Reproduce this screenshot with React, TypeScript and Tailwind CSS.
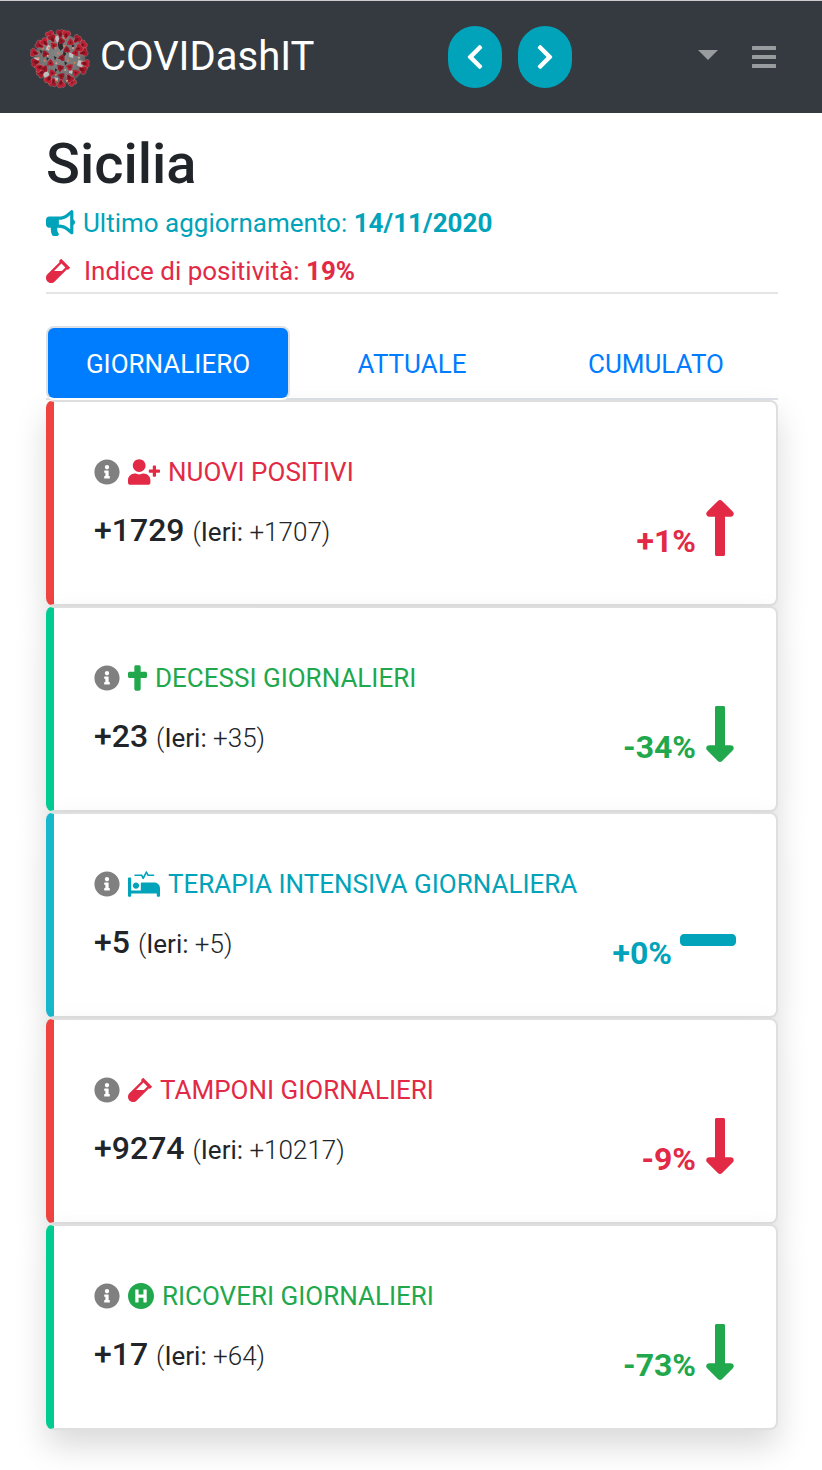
import React from 'react';
import {
  FaBullhorn,
  FaChevronLeft,
  FaChevronRight,
  FaCross,
  FaHospitalSymbol,
  FaInfoCircle,
  FaLongArrowAltDown,
  FaLongArrowAltUp,
  FaMinus,
  FaProcedures,
  FaUserPlus,
  FaVial,
} from 'react-icons/fa';
import type { IconType } from 'react-icons';

type Tone = 'danger' | 'success' | 'info';

const textTone: Record<Tone, string> = {
  danger: 'text-[#e22a46]',
  success: 'text-[#21a84d]',
  info: 'text-[#00a3b9]',
};

const borderTone: Record<Tone, string> = {
  danger: 'border-l-[#ee4340]',
  success: 'border-l-[#00cc92]',
  info: 'border-l-[#17b8cc]',
};

interface Stat {
  title: string;
  icon: IconType;
  iconWidth: string;
  value: string;
  previous: string;
  change: string;
  trend: 'up' | 'down' | 'flat';
  tone: Tone;
}

const stats: Stat[] = [
  { title: 'NUOVI POSITIVI', icon: FaUserPlus, iconWidth: 'w-8', value: '+1729', previous: '+1707', change: '+1%', trend: 'up', tone: 'danger' },
  { title: 'DECESSI GIORNALIERI', icon: FaCross, iconWidth: 'w-[19px]', value: '+23', previous: '+35', change: '-34%', trend: 'down', tone: 'success' },
  { title: 'TERAPIA INTENSIVA GIORNALIERA', icon: FaProcedures, iconWidth: 'w-8', value: '+5', previous: '+5', change: '+0%', trend: 'flat', tone: 'info' },
  { title: 'TAMPONI GIORNALIERI', icon: FaVial, iconWidth: 'w-6', value: '+9274', previous: '+10217', change: '-9%', trend: 'down', tone: 'danger' },
  { title: 'RICOVERI GIORNALIERI', icon: FaHospitalSymbol, iconWidth: 'w-[26px]', value: '+17', previous: '+64', change: '-73%', trend: 'down', tone: 'success' },
];

const CENTER = { x: 121, y: 117 };

const rimSpikes = [
  [91, 44], [122, 40], [140, 43], [173, 57], [190, 74], [193, 97], [198, 131], [190, 150],
  [157, 186], [150, 176], [124, 192], [99, 188], [86, 179], [63, 160], [57, 143], [46, 127],
  [43, 98], [59, 74], [74, 66], [97, 54], [178, 85],
];

const faceSpikes = [
  [101, 76], [76, 101], [92, 128], [127, 112], [151, 140], [121, 143], [97, 158],
  [141, 88], [168, 97], [126, 167], [167, 158], [124, 62], [152, 66], [75, 145],
];

const specks = [
  [84, 107], [107, 84], [133, 78], [110, 130], [145, 122], [165, 128], [137, 150], [108, 164],
  [88, 84], [160, 84], [115, 100], [75, 122], [142, 182], [112, 182], [70, 86], [178, 113], [132, 54], [56, 113],
];

function VirusLogo() {
  return (
    <svg viewBox="31 27 180 180" className="size-[60px] shrink-0" aria-hidden="true">
      <defs>
        <radialGradient id="virus-body" cx="50%" cy="42%" r="60%">
          <stop offset="0%" stopColor="#868888" />
          <stop offset="65%" stopColor="#747676" />
          <stop offset="100%" stopColor="#4f5051" />
        </radialGradient>
      </defs>
      <circle cx="121" cy="117" r="76" fill="url(#virus-body)" />
      <path
        d="M104 50l14-4 4 18-8 8zM148 98l14 2-2 14-11-3zM176 120l18 4-8 20-14-8zM62 152l18-4 10 16-14 10zM42 112l18 2-4 10-12-2zM84 74l8 4-4 14-10-4zM104 172l12 2-2 10-10-4zM150 150l10 2-4 10-8-4z"
        fill="#bfc0c0"
      />
      <path
        d="M114 66l14 2 3 16-8 8-7-10zM132 94l8 6-4 9-7-4zM102 108l9 4-5 9zM60 90l9 3-5 9zM134 124l9 5-7 8zM80 112l8 3-6 7zM156 72l9 5-7 7zM106 145l8 5-8 6z"
        fill="#2d2a2c"
      />
      {rimSpikes.map(([x, y], i) => {
        const angle = (Math.atan2(x - CENTER.x, CENTER.y - y) * 180) / Math.PI;
        return (
          <g key={i} transform={`translate(${x} ${y}) rotate(${angle})`}>
            <path
              d="M-4 14L-6 6L-12 1L-13 -6L-8 -11L-2 -9L4 -12L10 -9L13 -3L10 3L6 6L4 14Z"
              fill={i % 2 === 0 ? '#bb1f31' : '#a51a2b'}
              stroke="#d0a0a2"
              strokeOpacity="0.45"
              strokeWidth="2"
            />
            <path d="M-3 10L-5 2L1 -4L5 3L3 9Z" fill="#76131f" />
          </g>
        );
      })}
      {faceSpikes.map(([x, y], i) => (
        <g key={i} transform={`translate(${x} ${y}) rotate(${(i % 5) * 24 - 48})`}>
          <path d="M0 -11L6 -5L11 6L4 10L-3 8L-10 9L-8 -1Z" fill={i % 2 === 0 ? '#b81f30' : '#9c1929'} />
          <path d="M0 -4L4 3L-3 5Z" fill="#6f121d" />
        </g>
      ))}
      {specks.map(([x, y], i) => (
        <circle key={i} cx={x} cy={y} r="3" fill={i % 3 === 0 ? '#dca38b' : '#e07a52'} />
      ))}
    </svg>
  );
}

function Trend({ trend }: { trend: Stat['trend'] }) {
  if (trend === 'flat') {
    return <FaMinus className="ml-2 inline-block h-16 w-14 align-[-8px]" aria-hidden="true" />;
  }
  const Arrow = trend === 'up' ? FaLongArrowAltUp : FaLongArrowAltDown;
  return <Arrow className="ml-2 inline-block h-16 w-8 align-[-8px]" aria-hidden="true" />;
}

function StatCard({ stat }: { stat: Stat }) {
  const Icon = stat.icon;
  return (
    <article
      className={`flex items-end justify-between rounded-lg border-2 border-l-8 border-black/[.125] bg-white bg-clip-border p-10 shadow-[0_16px_32px_rgba(0,0,0,0.15)] ${borderTone[stat.tone]}`}
    >
      <div className="pt-2 pb-[10px]">
        <h2 className={`flex h-11 items-center gap-2 text-[26px] ${textTone[stat.tone]}`}>
          <button type="button" aria-label={`Informazioni: ${stat.title}`} className="text-[#808080]">
            <FaInfoCircle className="size-[26px]" />
          </button>
          <Icon className={`h-[26px] shrink-0 ${stat.iconWidth}`} aria-hidden="true" />
          <span>{stat.title}</span>
        </h2>
        <p className="mt-3 h-12 text-[26px] leading-[48px] font-light">
          <strong className="text-[32px] font-medium">{stat.value} </strong>
          (<span className="font-normal">Ieri:</span> {stat.previous})
        </p>
      </div>
      <p className={`text-[32px] leading-[46px] font-bold whitespace-nowrap ${textTone[stat.tone]}`}>
        {stat.change}
        <Trend trend={stat.trend} />
      </p>
    </article>
  );
}

const tabs = ['GIORNALIERO', 'ATTUALE', 'CUMULATO'];

export default function App() {
  const [active, setActive] = React.useState(0);
  return (
    <div className="min-h-screen bg-white pb-10 font-['Roboto',sans-serif] text-[#212529]">
      <header className="flex h-[113px] items-center justify-between border-t border-[#ccc] bg-[#343a40] pr-[46px] pl-[30px]">
        <a href="#" className="flex items-center gap-[10px] pr-2 text-[40px] text-white">
          <span className="pt-1">
            <VirusLogo />
          </span>
          <span>COVIDashIT</span>
        </a>
        <div className="flex gap-4 text-white">
          <button type="button" aria-label="Precedente" className="flex h-[62px] w-[54px] items-center justify-center rounded-full bg-[#00a3b9]">
            <FaChevronLeft className="h-7 w-[18px]" />
          </button>
          <button type="button" aria-label="Successivo" className="flex h-[62px] w-[54px] items-center justify-center rounded-full bg-[#00a3b9]">
            <FaChevronRight className="h-7 w-[18px]" />
          </button>
        </div>
        <div className="flex items-center gap-[34px] text-[#999c9f]">
          <button type="button" aria-label="Seleziona regione" className="pb-1">
            <svg viewBox="0 0 20 10" className="h-[10px] w-5" fill="currentColor" aria-hidden="true">
              <path d="M0 0h20L10 10z" />
            </svg>
          </button>
          <button type="button" aria-label="Menu">
            <svg viewBox="0 0 24 22" className="h-[22px] w-6" fill="currentColor" aria-hidden="true">
              <rect width="24" height="4" rx="0.5" />
              <rect y="9" width="24" height="4" rx="0.5" />
              <rect y="18" width="24" height="4" rx="0.5" />
            </svg>
          </button>
        </div>
      </header>

      <main className="mr-11 ml-[46px]">
        <section className="border-b-2 border-black/10 pt-4">
          <h1 className="pb-[3px] text-[56px] leading-[70px] font-medium">Sicilia</h1>
          <p className="flex h-[42px] items-center gap-2 text-[26px] text-[#00a3b9]">
            <FaBullhorn className="h-[26px] w-[29px] shrink-0" aria-hidden="true" />
            <span>
              Ultimo aggiornamento: <strong className="font-bold">14/11/2020</strong>
            </span>
          </p>
          <p className="mt-[6px] flex h-[42px] items-center gap-[14px] text-[26px] text-[#e22a46]">
            <FaVial className="h-[26px] w-6 shrink-0" aria-hidden="true" />
            <span>
              Indice di positività: <strong className="font-bold">19%</strong>
            </span>
          </p>
        </section>

        <div role="tablist" className="mt-8 grid grid-cols-3 border-b-2 border-[#dee2e6]">
          {tabs.map((tab, i) => (
            <button
              key={tab}
              type="button"
              role="tab"
              aria-selected={i === active}
              onClick={() => setActive(i)}
              className={
                i === active
                  ? '-mb-[2px] h-[74px] rounded-lg border-2 border-[#dee2e6] border-b-white bg-[#007dff] pt-[2px] text-[26px] text-white'
                  : '-mb-[2px] h-[74px] rounded-lg border-2 border-transparent pt-[2px] text-[26px] text-[#007dff]'
              }
            >
              {tab}
            </button>
          ))}
        </div>

        <div role="tabpanel">
          {stats.map((stat) => (
            <StatCard key={stat.title} stat={stat} />
          ))}
        </div>
      </main>
    </div>
  );
}
